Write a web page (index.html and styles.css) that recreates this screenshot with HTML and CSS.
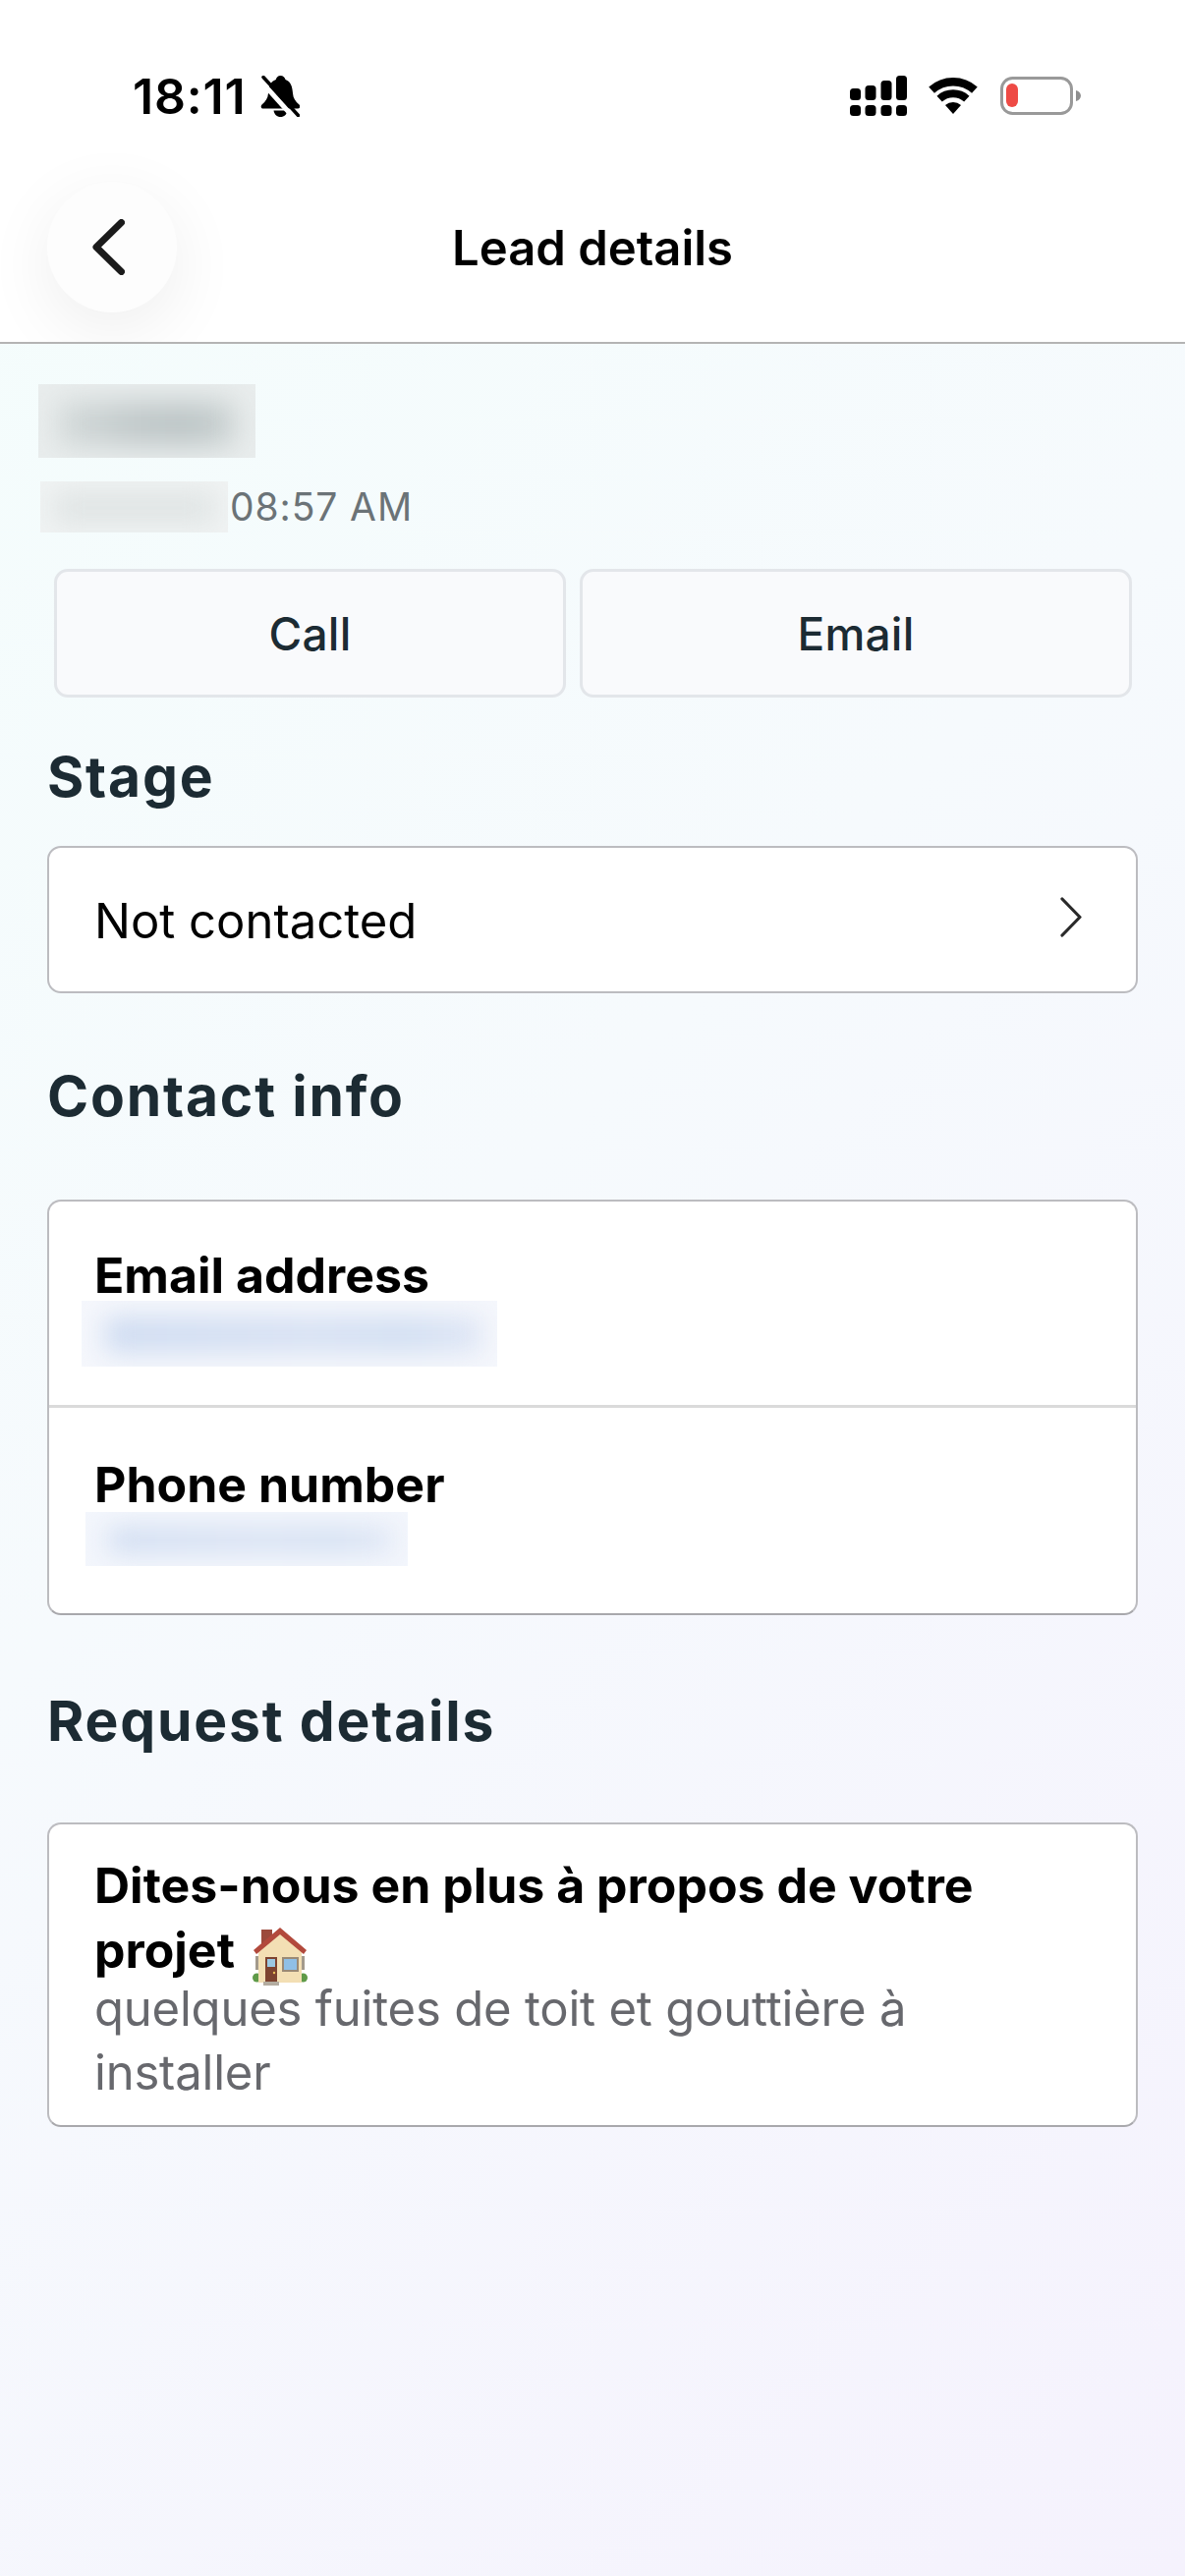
FILE: index.html
```html
<!DOCTYPE html>
<html lang="en">
<head>
<meta charset="utf-8">
<title>Lead details</title>
<link rel="stylesheet" href="styles.css">
</head>
<body>
<div class="page">
  <header class="top">
    <div class="status">
      <div class="status-left">
        <span class="clock">18:11</span>
        <svg class="bell" viewBox="0 0 40 42" width="40" height="42">
          <path d="M20.500 0c-2.600 0-4.300 1.700-4.700 4C10 6 8.500 11 8 18c-.4 5-2.500 8-6.500 11.500-1.500 1.500-1 4 1.500 4h35c2.500 0 3-2.500 1.500-4C35.500 26 33.400 23 33 18c-.5-7-2-12-7.500-14-.5-2.300-2.400-4-5-4z"/>
          <path d="M13.500 35.500h14c-.5 3.800-3.300 6.500-7 6.500s-6.500-2.700-7-6.500z"/>
          <path class="bell-gap" d="M-1 4 36 45"/>
          <path class="bell-slash" d="M3 1.500 38.500 40.500"/>
        </svg>
      </div>
      <div class="status-right">
        <svg class="signal" viewBox="0 0 58 41" width="58" height="41">
          <rect x="0" y="13" width="11" height="12" rx="3.500"/>
          <rect x="15.500" y="10" width="11" height="15" rx="3.500"/>
          <rect x="31.500" y="5" width="11" height="20" rx="3.500"/>
          <rect x="47" y="0" width="11" height="25" rx="3.500"/>
          <rect x="0" y="30" width="11" height="11" rx="3.500"/>
          <rect x="15.500" y="30" width="11" height="11" rx="3.500"/>
          <rect x="31.500" y="30" width="11" height="11" rx="3.500"/>
          <rect x="47" y="30" width="11" height="11" rx="3.500"/>
        </svg>
        <svg class="wifi" viewBox="0 0 50 37" width="50" height="37">
          <path class="wifi-arc" stroke-width="8.500" d="M3.100 12.700A32.700 32.700 0 0 1 46.900 12.700"/>
          <path class="wifi-arc" stroke-width="8" d="M11.150 21.600A20.700 20.700 0 0 1 38.850 21.600"/>
          <path d="M25 37 17 28.100A12 12 0 0 1 33 28.100Z"/>
        </svg>
        <svg class="battery" viewBox="0 0 82 39" width="82" height="39">
          <rect class="battery-shell" x="1.500" y="1.500" width="71" height="36" rx="11"/>
          <rect class="battery-fill" x="6" y="7" width="12" height="24" rx="6"/>
          <path class="battery-nub" d="M77 14c3 .5 5 3 5 5.500s-2 5-5 5.500z"/>
        </svg>
      </div>
    </div>
    <nav class="nav">
      <div class="nav-side">
        <button class="back" type="button" aria-label="Back">
          <svg viewBox="0 0 33 57" width="33" height="57"><path d="M29.500 3.500 4 28.500 29.500 53.500"/></svg>
        </button>
      </div>
      <h1 class="title">Lead details</h1>
      <div class="nav-side"></div>
    </nav>
  </header>

  <main class="content">
    <div class="redact redact-name"><span class="blob blob-name"></span></div>
    <div class="date-row">
      <div class="redact redact-date"><span class="blob blob-date"></span></div>
      <span class="time">08:57 AM</span>
    </div>

    <div class="actions">
      <button class="action" type="button">Call</button>
      <button class="action" type="button">Email</button>
    </div>

    <h2 class="section section-stage">Stage</h2>
    <div class="card stage-card">
      <span class="stage-value">Not contacted</span>
      <svg class="chevron" viewBox="0 0 24 41" width="24" height="41"><path d="M4 2 22 20.500 4 39"/></svg>
    </div>

    <h2 class="section section-contact">Contact info</h2>
    <div class="card contact-card">
      <div class="field field-email">
        <div class="label">Email address</div>
        <div class="redact redact-email"><span class="blob blob-blue"></span></div>
      </div>
      <div class="field field-phone">
        <div class="label">Phone number</div>
        <div class="redact redact-phone"><span class="blob blob-blue"></span></div>
      </div>
    </div>

    <h2 class="section section-request">Request details</h2>
    <div class="card request-card">
      <div class="label label-long">Dites-nous en plus à propos de votre projet
        <svg class="house" viewBox="0 0 56 60" width="56" height="60">
          <rect x="9" y="3" width="11" height="19" fill="#9c4a3c"/>
          <circle cx="4.500" cy="52" r="4.500" fill="#5f9a48"/>
          <circle cx="51.500" cy="52" r="4.500" fill="#5f9a48"/>
          <path d="M6 24 28 6 50 24V57H6z" fill="#f3dfb4"/>
          <path d="M1 24 28 1 55 24 52 28 28 8 4 28z" fill="#b2493c"/>
          <rect x="3" y="30" width="3" height="14" fill="#a39a8c"/>
          <rect x="50" y="30" width="3" height="14" fill="#a39a8c"/>
          <rect x="13" y="31" width="12" height="25" fill="#7d4330"/>
          <rect x="15" y="33" width="8" height="8" fill="#9cc8e2"/>
          <circle cx="22" cy="47" r="1.200" fill="#e8c15a"/>
          <rect x="30" y="31" width="17" height="15" fill="#9a8a76"/>
          <rect x="32" y="33" width="13" height="11" fill="#8fbfe6"/>
          <rect x="11" y="56" width="16" height="4" fill="#b3aca0"/>
        </svg>
      </div>
      <div class="answer">quelques fuites de toit et gouttière à installer</div>
    </div>
  </main>
</div>
</body>
</html>
```

FILE: styles.css
```css
* {
  box-sizing: border-box;
}

html,
body {
  margin: 0;
  padding: 0;
}

body {
  font-family: Inter, "Liberation Sans", sans-serif;
  color: #000;
}

.page {
  min-height: 2622px;
  width: 1206px;
  display: flex;
  flex-direction: column;
  background: linear-gradient(135deg, #f4fdfc 0%, #f6fafd 45%, #f5f2fd 100%);
}

/* Header */
.top {
  height: 350px;
  background: #fff;
  border-bottom: 2px solid #b4b4b4;
  overflow: hidden;
  flex: none;
}

.status {
  height: 185px;
  padding: 77px 106px 0 135px;
  display: flex;
  justify-content: space-between;
  align-items: flex-start;
}

.status-left {
  display: flex;
  align-items: flex-start;
  gap: 15px;
}

.clock {
  font-size: 50px;
  font-weight: 600;
  line-height: 42px;
  letter-spacing: 0.800px;
}

.bell-gap {
  stroke: #fff;
  stroke-width: 5;
  fill: none;
}

.bell-slash {
  stroke: #000;
  stroke-width: 3.500;
  stroke-linecap: round;
  fill: none;
}

.status-right {
  display: flex;
  align-items: flex-start;
}

.signal {
  display: block;
}

.wifi {
  display: block;
  margin: 2px 0 0 22px;
}

.wifi-arc {
  fill: none;
  stroke: #000;
}

.battery {
  display: block;
  margin: 1px 0 0 23px;
}

.battery-shell {
  fill: none;
  stroke: #999;
  stroke-width: 3;
}

.battery-fill {
  fill: #ee4a45;
}

.battery-nub {
  fill: #8e8e8e;
}

.nav {
  display: grid;
  grid-template-columns: 1fr auto 1fr;
  align-items: center;
  padding: 0 48px;
  height: 133px;
}

.back {
  width: 132px;
  height: 133px;
  border: 0;
  border-radius: 50%;
  background: #fdfdfd;
  box-shadow: 0 18px 70px rgba(0, 0, 0, 0.07);
  padding: 0 8px 0 0;
  display: flex;
  align-items: center;
  justify-content: center;
}

.back svg {
  display: block;
  fill: none;
  stroke: #1b1b1b;
  stroke-width: 7;
  stroke-linecap: round;
  stroke-linejoin: round;
}

.title {
  margin: 0;
  padding-top: 3px;
  font-size: 49px;
  font-weight: 600;
  line-height: 60px;
  letter-spacing: 0;
}

/* Content */
.content {
  padding: 41px 48px 0;
}

.redact {
  overflow: hidden;
  position: relative;
  flex: none;
}

.blob {
  display: block;
  position: absolute;
  filter: blur(14px);
}

.redact-name {
  width: 221px;
  height: 75px;
  margin-left: -9px;
  background: #e9eded;
}

.blob-name {
  inset: 18px 20px 12px 20px;
  background: linear-gradient(90deg, #d4dada, #c0c8c9 45%, #bcc5c6 75%, #cdd4d4);
}

.date-row {
  display: flex;
  align-items: center;
  margin: 24px 0 0 -7px;
  gap: 2px;
}

.redact-date {
  width: 191px;
  height: 52px;
  background: #f0f3f3;
}

.blob-date {
  inset: 12px 14px 10px 14px;
  background: #dee3e3;
}

.time {
  font-size: 39px;
  line-height: 52px;
  color: #6b7377;
  letter-spacing: 0.900px;
}

.actions {
  display: grid;
  grid-template-columns: 521px 562px;
  gap: 14px;
  margin: 37px 6px 0 7px;
}

.action {
  height: 131px;
  border: 3px solid #e3e6ea;
  border-radius: 14px;
  background: #f9fafc;
  font-family: inherit;
  font-size: 46px;
  font-weight: 450;
  letter-spacing: 0.200px;
  color: #1c2b33;
  padding: 0;
}

.section {
  margin: 0;
  font-size: 57px;
  font-weight: 700;
  line-height: 66px;
  color: #1c2b33;
  letter-spacing: 1.800px;
}

.section-stage {
  margin-top: 48px;
}

.section-contact {
  margin-top: 72px;
}

.section-request {
  margin-top: 75px;
}

.card {
  background: #fff;
  border: 2px solid #bcbcc0;
  border-radius: 14px;
}

.stage-card {
  height: 150px;
  margin-top: 37px;
  padding: 0 55px 0 46px;
  display: flex;
  align-items: center;
  justify-content: space-between;
}

.stage-value {
  font-size: 49px;
  line-height: 60px;
  padding-top: 4px;
}

.chevron {
  display: block;
  fill: none;
  stroke: #2a2a2a;
  stroke-width: 3.200;
  stroke-linecap: round;
  stroke-linejoin: round;
  margin-top: -6px;
}

.contact-card {
  height: 423px;
  margin-top: 72px;
  overflow: hidden;
  border-bottom-color: #a8a8ac;
}

.field {
  padding: 42px 0 0 46px;
}

.field-email {
  height: 210px;
  border-bottom: 3px solid #dadada;
}

.label {
  font-size: 50px;
  font-weight: 700;
  line-height: 66px;
  letter-spacing: 0;
}

.redact-email {
  width: 423px;
  height: 67px;
  margin: -7px 0 0 -13px;
  background: #f5f7fc;
}

.redact-phone {
  width: 328px;
  height: 55px;
  margin: -5px 0 0 -9px;
  background: #f3f6fc;
}

.blob-blue {
  inset: 16px 16px 14px 24px;
  background: linear-gradient(90deg, #cfdcf1, #d7e1f3 55%, #d2dff2 80%, #dfe6f5);
  filter: blur(13px);
}

.field-phone {
  padding-top: 45px;
}

.request-card {
  height: 310px;
  margin-top: 70px;
  padding: 29px 46px 0;
  border-bottom-color: #a8a8ac;
}

.label-long .house {
  vertical-align: -12px;
  margin: -20px 0 -6px 6px;
}

.answer {
  font-size: 49px;
  line-height: 65px;
  letter-spacing: -0.200px;
  color: #67686d;
  margin-top: -6px;
}
```
